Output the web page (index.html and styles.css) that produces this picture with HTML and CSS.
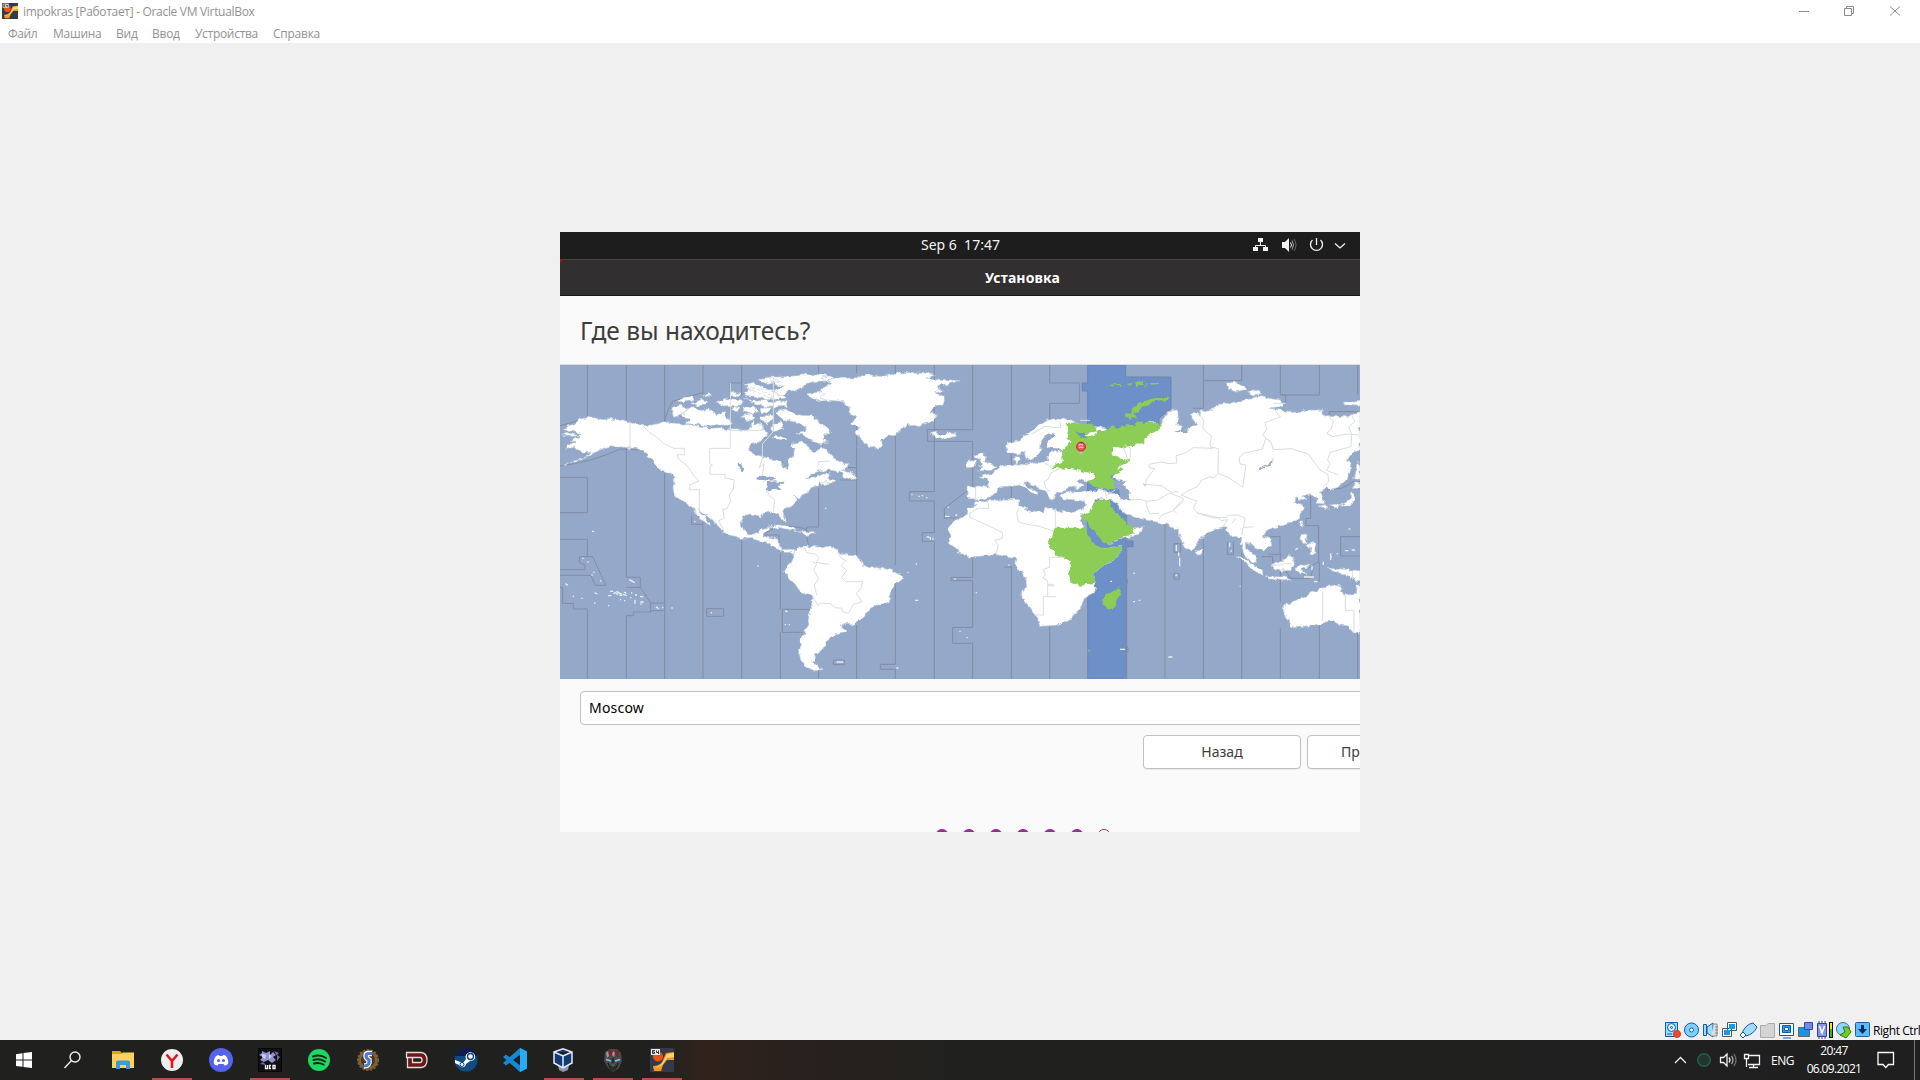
FILE: index.html
```html
<!DOCTYPE html>
<html lang="ru">
<head>
<meta charset="utf-8">
<title>impokras [Работает] - Oracle VM VirtualBox</title>
<link rel="stylesheet" href="styles.css">
</head>
<body>
<header class="titlebar">
  <svg class="app-icon" viewBox="0 0 24 24"><use href="#vm64"/></svg>
  <span class="window-title">impokras [Работает] - Oracle VM VirtualBox</span>
  <svg class="window-controls" width="110" height="20" viewBox="0 0 110 20" fill="none" stroke="#8c8c8c"><path d="M3 10.500H13M48.500 7.500H55.500V14.500H48.500ZM50.500 7V5.500H57.500V12.500H56M94 5.500L104 14.500M94 14.500L104 5.500"/></svg>
</header>
<nav class="menubar"><span class="m1">Файл</span><span class="m2">Машина</span><span class="m3">Вид</span><span class="m4">Ввод</span><span class="m5">Устройства</span><span class="m6">Справка</span></nav>

<main class="desktop">
<section class="guest">
  <div class="gnome-bar">
    <span class="clock">Sep 6&nbsp; 17:47</span>
    <svg class="gnome-icons" width="100" height="27" viewBox="0 0 100 27" fill="none" stroke="#f2f2f2">
      <path d="M8.500 10V13M3.500 18V13.500H13.500V18"/><path fill="#f2f2f2" stroke="none" d="M6 6h5v4h-5ZM1 15h5v4h-5ZM11 15h5v4h-5ZM30 10h3l4-4v14l-4-4h-3Z"/>
      <path d="M38.500 10.500Q40.500 13 38.500 15.500"/><path stroke="#aaa" d="M40 8.500Q43 13 40 17.500"/><path stroke="#666" d="M42 7Q46 13 42 19"/>
      <path stroke-width="1.300" d="M60.500 8A6 6 0 1 0 68.500 8M64.500 6V13M83 11.500L88 16L93 11.500"/>
    </svg>
  </div>
  <div class="installer-title"><i class="corner"></i><b>Установка</b></div>
  <h1>Где вы находитесь?</h1>
  <svg class="map" viewBox="0 0 2400 942" preserveAspectRatio="none">
    <defs><filter id="coast" filterUnits="userSpaceOnUse" x="0" y="0" width="2400" height="942" color-interpolation-filters="sRGB"><feTurbulence type="fractalNoise" baseFrequency=".06" numOctaves="2" seed="4"/><feDisplacementMap in="SourceGraphic" scale="16" xChannelSelector="R" yChannelSelector="G"/></filter></defs>
    <rect width="2400" height="942" fill="#94a8ca"/>
    <path fill="#6d90c8" stroke="#6b84b1" stroke-width="3" d="M1583 0H1697V36H1833V130L1797 160V185L1755 180L1700 190V942H1583V78H1567V54H1583ZM1697 528h22v17h-22z"/>
    <g class="zone-lines">
      <path d="M82 0V160M82 337V443M82 523V575M82 732V942M199 0V168M199 250V637M199 752V942M314 0V170M314 315V714M314 737V942M429 0V90M429 472V942M545 0V90M545 520V942M661 565V733M661 802V942M776 0V50M776 370V486H740V510M776 915V942M890 0V25M890 180V308M890 345V570M890 780V942M1006 0V35M1006 210V600M1006 650V898M1006 913V942M1123 0V380M1123 408V503M1123 529V942M1238 0V194M1238 229V370M1238 580V637M1238 647V787M1238 835V942M1354 0V300M1354 365V400M1354 606V942M1469 0V54H1558V115H1469V180M1469 785V942M1583 730V942M1699 200V640M1699 656V847M1699 860V942M1815 36V150M1815 470V942M1930 0V130M1930 500V942M2045 0V47H1930M2045 560V942M2161 0V90H2278V0M2161 565V710M2161 790V942M2278 590V650M2278 770V942M2393 0V90M2393 800V942"/>
      <path d="M0 337H82M0 443H82M0 523H82M0 614H75V600L58 593V575H98L138 661H106L93 631H0M0 668H8V715H40V732H82M199 637H241V667H199M241 667L272 714H314V737H272V741H220V752H199M272 714V740M440 731H491V754H440ZM395 452V478H429M314 168Q330 105 350 105L429 83M509 54H545M509 54V140M667 733H750M667 733V802H728M605 510H657V560M605 510L660 480L735 490L745 540M0 182L80 160M0 303Q100 290 180 252L260 255L340 330"/>
      <path d="M1238 194H1102V229H1238M1123 380H1048V408H1123M1225 375L1153 430V459H1190M1123 503H1087V529H1123M1238 637H1173V647H1238M1238 787H1178V835H1238M1006 898H961V913H1006M820 885H853V899H820ZM1358 606H1333M782 308H890V345H840M1643 643H1702V656H1643ZM1842 536H1862V562H1842ZM1842 626H1858V642H1842ZM1680 847H1704V860H1680M2165 90H2177V115M2308 155V140H2400M2252 390V460H2238V482H2276V590L2245 610M2400 515H2342V573H2400M2130 515H2160V568H2125M2105 575H2138V595M2002 530V568H2020V530M2300 375L2345 370L2380 350H2400M1900 130H1930M2175 610L2190 640H2250L2260 610"/>
    </g>
    <g filter="url(#coast)">
    <g class="land">
      <path d="M5 207L30 205 55 212 60 205 35 199 13 192 27 182 48 173 58 163 90 157 128 164 158 163 198 168 245 177 268 182 310 171 345 175 376 178 420 184 450 190 480 188 504 194 555 196 570 188 579 164 586 180 601 178 609 195 624 204 611 222 598 232 574 237 566 252 581 268 610 275 638 285 662 290 667 304 683 314 690 300 684 284 701 270 705 251 694 243 697 234 727 232 746 242 750 257 766 263 783 246 799 252 807 264 824 282 849 296 865 296 861 310 844 316 868 319 882 328 887 340 870 345 850 338 845 325 827 318 808 315 775 318 757 328 735 342 765 337 790 327 811 326 806 340 828 347 792 362 776 353 771 362 753 368 747 382 727 389 718 403 704 393 710 407 696 424 672 432 668 440 678 463 673 470 661 457 657 445 628 440 610 445 600 454 571 447 549 453 543 474 549 494 565 506 591 507 600 491 628 486 632 492 616 503 609 514 636 519 654 523 655 543 670 554 690 553 704 558 702 569 690 562 671 562 652 552 637 546 620 531 590 526 570 518 544 520 520 513 490 503 482 491 463 471 450 461 434 447 414 433 425 446 439 462 452 481 443 477 425 463 411 451 401 430 385 420 375 411 356 401 341 383 339 365 345 337 330 326 303 318 292 306 283 291 265 276 252 257 227 250 194 247 151 242 126 252 102 264 74 281 45 291 12 300 43 287 75 279 96 261 68 263 51 256 44 247 18 250 22 236 40 237 50 229 31 229 42 220 60 220 59 213 18 214Z"/>
      <path d="M340 152L333 135 344 124 366 121 383 131 373 142 355 157ZM369 140L396 125 425 140 443 129 470 150 490 143 501 158 520 172 508 181 469 179 437 183 410 177 379 176 392 160 363 153ZM350 109L376 97 397 94 402 103 376 111ZM395 115L424 103 449 109 439 119 414 122ZM425 96L446 83 455 93ZM470 115L500 101 525 105 550 109 543 120 492 123ZM515 80L545 88 535 95 509 88ZM550 78L573 68 599 72 617 83 640 97 620 104 584 94 557 91ZM553 61L584 54 611 69 650 83 678 98 650 104 620 94 583 80ZM593 44L632 39 663 48 624 55ZM626 37L679 35 738 29 780 28 810 31 806 40 774 51 737 58 714 75 681 80 665 92 641 83 652 71 674 66 650 60 635 50ZM550 100L580 108 617 107 650 111 680 107 680 124 642 126 615 125 581 115ZM525 122L540 127 532 140 514 137ZM550 130L580 123 598 139 570 146 550 140ZM600 130L633 128 620 143 605 143ZM546 152L574 146 584 158 562 170ZM600 158L632 147 638 162 620 175 602 167ZM648 141L672 132 700 142 720 151 755 152 783 177 805 190 815 204 795 207 786 220 800 231 780 237 752 226 731 209 708 206 735 201 739 188 716 174 698 169 665 162ZM640 178L665 170 669 190 650 198 630 194ZM635 222L650 211 681 221 675 227ZM738 86L765 83 802 78 825 104 784 108 754 98Z"/>
      <path d="M780 36L810 34 824 43 790 48 845 40 889 38 920 28 966 35 1018 24 1080 21 1123 31 1100 39 1144 43 1200 47 1153 60 1131 66 1153 77 1127 83 1154 99 1150 119 1123 126 1109 144 1132 149 1120 170 1080 181 1038 182 1006 208 983 211 966 228 962 247 946 250 920 240 902 219 888 201 898 184 872 174 891 156 864 143 873 132 846 109 805 106 780 101 796 89 781 74 813 55Z"/>
      <path d="M1110 205L1130 202 1128 209 1151 209 1170 202 1190 205 1188 214 1153 223 1131 220 1119 214ZM625 487L650 480 681 482 709 495 717 499 690 494 660 488ZM716 504L735 498 768 505 743 511ZM780 355L803 350 796 362Z"/>
      <path d="M704 558L719 545 740 540 747 547 764 541 788 548 807 544 830 553 840 564 863 571 888 573 904 588 908 601 952 608 984 613 1008 622 1025 632 1024 645 1006 659 995 675 993 692 983 712 956 720 928 730 919 746 897 766 882 779 855 778 843 783 858 794 849 805 817 811 812 824 796 829 801 843 787 852 776 864 763 865 766 880 758 890 775 905 790 913 765 917 740 908 723 888 715 862 724 842 720 823 733 802 743 780 748 746 755 719 757 695 738 687 719 678 707 659 692 645 683 631 670 623 680 603 695 592 701 573Z"/>
      <path d="M1224 366L1257 363 1284 368 1289 351 1278 339 1260 334 1284 328 1301 320 1327 303 1354 302 1370 298 1361 278 1373 270 1380 284 1373 297 1400 299 1423 291 1450 295 1468 287 1460 271 1483 260 1510 255 1495 250 1464 252 1458 238 1466 221 1484 207 1464 204 1450 220 1436 240 1446 253 1430 275 1412 285 1396 279 1390 262 1375 267 1345 262 1336 250 1340 235 1378 227 1405 205 1440 176 1465 165 1505 159 1537 166 1570 181 1640 188 1700 220 1770 170 1800 180 1825 137 1852 135 1856 160 1850 180 1870 184 1880 197 1895 184 1910 180 1890 150 1902 142 1920 150 1922 139 1960 132 1980 118 2030 110 2072 101 2094 94 2122 99 2160 105 2170 116 2164 125 2125 129 2175 139 2227 139 2240 135 2286 136 2286 148 2304 155 2367 154 2389 143 2400 140V254L2380 263 2355 287 2370 292 2374 310 2365 330 2351 352 2338 366 2316 371 2298 365 2280 382 2289 398 2290 416 2271 415 2271 399 2257 388 2240 385 2232 394 2238 403 2216 403 2208 396 2205 408 2230 424 2228 440 2214 462 2190 475 2152 486 2133 489 2120 497 2110 514 2133 524 2135 540 2113 556 2087 550 2069 535 2056 530 2057 552 2090 576 2092 592 2074 590 2053 569 2043 537 2045 516 2020 518 2001 498 1997 485 1986 486 1970 490 1950 500 1932 515 1913 522 1912 542 1894 559 1872 545 1859 514 1858 489 1840 491 1823 478 1780 469 1745 462 1725 456 1702 450 1684 436 1663 408 1630 402 1606 400 1596 428 1615 450 1650 485 1719 490 1750 485 1744 499 1719 514 1690 520 1650 535 1625 538 1610 510 1582 470 1563 450 1560 465 1580 500 1598 530 1618 543 1635 551 1685 541 1689 552 1660 585 1625 605 1602 625 1602 655 1608 670 1602 685 1568 700 1567 725 1548 745 1530 766 1498 780 1440 784 1430 755 1412 729 1386 698 1385 681 1400 665 1399 646 1388 623 1366 605 1371 577 1335 574 1305 568 1269 576 1233 578 1198 564 1184 546 1165 534 1171 518 1164 490 1180 470 1208 454 1222 448 1225 430 1245 422 1250 410 1297 409 1331 402 1377 404 1376 421 1408 438 1450 440 1455 427 1489 436 1530 443 1564 436 1580 416 1575 405 1545 408 1513 405 1497 392 1505 385 1535 381 1567 379 1597 377 1618 371 1630 375 1673 392 1695 405 1705 387 1684 365 1660 335 1670 320 1612 342 1575 350 1560 343 1550 350 1570 360 1554 372 1539 360 1516 372 1505 383 1490 381 1482 405 1470 402 1458 382 1445 372 1419 362 1402 349 1391 358 1404 367 1432 377 1434 391 1412 382 1395 369 1378 357 1345 364 1319 365 1308 382 1290 397 1253 405 1224 399Z"/>
      <path d="M1219 305L1221 289 1250 286 1245 303ZM1252 318L1270 309 1254 304 1270 296 1257 280 1246 275 1256 263 1273 264 1267 272 1280 276 1277 287 1294 300 1308 305 1296 316ZM1909 558L1926 555 1925 569 1912 570ZM1999 54L2030 51 2050 60 2061 75 2036 81 2006 69ZM2063 80L2093 76 2108 86 2077 89ZM2350 112L2400 106V124L2354 120ZM2222 470L2232 473 2227 486 2220 480ZM2275 424L2297 419 2305 433 2295 428ZM2304 421L2325 418 2345 419 2361 410 2371 403 2372 382 2382 387 2386 404 2366 423 2341 421 2325 434 2317 425ZM2378 370L2385 350 2400 355V370ZM2384 340L2392 290 2400 310V345ZM2220 509L2238 507 2235 526 2244 532 2228 536ZM2235 540L2264 532 2265 568 2250 567 2253 550ZM2028 572L2053 580 2082 601 2107 615 2109 628 2088 623 2060 595ZM2115 635L2175 636 2193 644 2175 647 2125 641ZM2133 602L2150 594 2177 580 2190 568 2198 577 2204 600 2190 616 2162 618 2140 610ZM2215 605L2250 597 2240 606 2225 615 2240 629 2223 621 2220 629 2208 614ZM2305 607L2328 609 2350 613 2400 617V647L2383 645 2370 634 2339 626 2310 614ZM2171 719L2206 710 2235 696 2250 682 2275 674 2293 665 2325 661 2347 667 2341 680 2365 690 2390 684 2392 657 2400 657V806L2380 803 2362 782 2340 780 2313 768 2284 774 2253 783 2215 784 2190 786 2183 760 2170 739Z"/>
    </g>
    <g fill="#94a8ca">
      <path d="M610 222L632 204 645 208 640 222 681 226 690 206 680 188 700 202 697 240 640 235ZM532 296L544 298 552 318 543 317ZM587 343L602 332 628 334 649 344 630 347ZM621 376L624 351 644 349 658 351 675 350 675 359 654 359 661 374 638 375ZM1660 348L1698 346 1690 360 1708 378 1711 403 1682 403 1674 378 1657 365ZM1475 208L1487 206 1476 222 1460 231 1455 245 1510 255 1465 257 1444 250 1440 238 1460 222ZM2096 310L2118 302 2140 282 2140 294 2121 306 2101 315ZM1837 202L1862 195 1867 182 1890 188 1876 193 1884 201ZM1746 355L1760 361 1750 362Z"/>
    </g>
    <g fill="#8bcd55">
      <path d="M1517 174L1560 172 1610 185 1613 199 1580 205 1569 215 1590 213 1610 207 1611 195 1635 195 1657 184 1672 191 1700 181 1728 180 1732 170 1759 178 1767 172 1802 179 1803 190 1773 207 1753 220V238L1717 240 1692 250 1660 245 1658 268 1680 281 1710 285 1709 292 1670 306 1688 315 1670 325 1654 330 1661 348 1665 366 1655 376 1620 370 1580 354 1609 337 1602 325 1560 318 1535 313 1500 310 1475 309 1488 297 1508 288 1506 256 1535 230 1520 221 1524 193ZM1705 160L1693 147 1713 144 1718 127 1742 112 1777 101 1825 98 1827 104 1785 112 1750 124 1736 142 1719 147 1733 160ZM1645 57L1658 60 1672 57 1690 61 1684 65 1665 61 1656 65ZM1700 58L1718 54 1714 60ZM1722 54L1742 47 1738 54 1750 46 1746 59 1725 67 1732 58ZM1752 62L1766 54 1762 62ZM1770 54L1800 54 1797 58 1773 59ZM1563 450L1588 440 1606 409 1629 401 1650 409 1662 437 1684 451 1699 479 1723 487 1720 505 1688 518 1650 535 1628 536 1613 510 1582 476ZM1483 488H1576L1602 530 1618 543 1635 551 1685 541 1689 552 1660 585 1625 605 1602 625 1605 657 1560 662 1528 648 1523 621 1534 592 1510 578 1484 566 1463 536 1477 513ZM1633 688L1660 682 1672 668 1682 668 1682 682 1665 725 1643 735 1628 718ZM1583 857h8v5h-8z"/>
    </g>
    <path fill="#6d90c8" d="M1540 197L1570 207 1584 220 1560 216ZM1580 466L1595 489 1610 505 1630 534 1663 541 1641 550 1616 544 1594 529 1581 506ZM1670 440L1700 452V465L1684 461ZM1583 372L1596 366 1618 373 1612 381Z"/>
    </g>
    <g class="borders">
      <path d="M210 170V250M245 178L267 202 285 212 310 235 341 250H373V269H352L355 282 382 303 401 331 417 348 390 359 388 374H418V435M511 54V250H449V295L457 300 450 306V328H495V338L523 345 519 375 508 390 512 410 500 432H488L493 460 475 467 490 493M509 196H609V180M640 40V200L607 237V282L598 308 612 297 607 332M622 375L628 392 644 405 640 440M776 300V290L808 288M732 545L740 563 767 567 778 580 768 592 807 598M832 560L844 580 858 587 843 602 860 616 845 637 856 650H908L902 672 888 685 906 710 880 718 866 745 847 740 846 730 827 728 810 716 781 714 775 722 758 696M758 590L770 597 761 614 776 641 763 660 770 690"/>
      <path d="M1247 365V400H1224M1284 410L1286 430 1255 430 1229 445V456L1327 502V520L1303 526 1315 540 1308 567M1376 430L1370 444 1375 470 1400 478 1434 483 1480 498M1486 430V486M1515 577L1469 577V607L1450 613 1456 630 1448 638 1463 648V658H1480V664L1463 660V695H1488M1463 694H1450V750H1424M1500 170L1502 189 1455 184 1415 207M1455 295L1476 309M1500 310L1473 324 1465 342 1452 350 1459 372 1471 380M1560 166L1590 166M1693 240L1712 250 1710 278M1690 245L1705 290M1635 375L1640 400M1642 390L1665 375"/>
      <path d="M1920 150L1932 167 1928 190 1955 215 1949 240 1959 250 1900 248 1880 262 1848 273 1851 294 1827 296 1804 291 1767 298V308L1784 311 1762 340 1755 358 1804 362 1835 382 1854 380M1950 245L1975 251 1974 326 1961 339 1950 335 1925 345 1912 365 1882 378 1864 390 1897 404 1911 408 1900 430 1913 444 1960 459 1998 457 2005 451 2035 450 2055 460 2050 488 2080 485M1975 326L2004 337 2032 355 2048 367 2058 300 2040 297 2037 278 2052 264 2107 253 2117 220 2133 231 2140 254 2195 251 2245 267 2280 315 2304 329 2306 350 2289 365M2142 131L2161 156 2145 162 2115 173 2120 192 2108 210 2119 220 2133 231M2307 155L2320 170 2314 190 2300 205 2318 215 2363 207 2400 210M2375 150L2385 170 2366 185 2375 208 2373 245 2310 262 2303 285 2310 298 2300 316 2335 330M1709 405L1740 403 1760 409 1793 405 1829 384 1870 400 1867 412 1840 437 1805 450 1797 462M1760 409V425L1770 446 1797 445M1864 408L1840 435 1850 445M1913 444L1975 458 1983 467 2002 464 1990 484M2015 475L2028 460M2049 488L2045 510M2177 115H2140M2288 680V767M2356 690V736H2382V803M2378 617V643M2134 600H2167L2170 596H2195"/>
    </g>
    <path class="islands" d="M67 580h4M82 591h4M100 622h4M94 630h4M120 648h4M96 499h6M16 656l8 5M104 683l8 4M38 694h4M64 700h4M102 714h4M144 722h4M144 692h10M150 679h10M164 681l10 8M175 682l10 6M178 691h9M188 687l12 5M170 678l5 5M160 685h5M192 681l7 4M180 704h4M192 707h4M213 684h4M210 698h4M225 690h6M240 695h10M225 704v12M241 711h10M241 717h4M208 644l16 9M288 725l8 6M306 728h4M334 729h4M452 743h4M403 470h4M592 603h4M675 738l8 2M674 779h4M686 779h4M795 430h4M1054 389h4M1075 394h4M1085 392h4M1098 398h4M1163 427h4M1155 454h14M1186 452l6-3M1100 516h8M1111 516v8M1119 518v6M1067 597h4M1042 622h4M1065 706h10M1183 642h4M1247 683h4M1345 600h4M1198 799h4M1219 818h4M830 891h20M1009 909h6M1651 649h5M1680 853h15M1720 625h5M1720 710h5M1736 706h5M1825 876h12M1849 540v18M1856 562v12M1859 578v26M1846 630h6M2009 533v12M2012 558h4M2039 664h3M2206 555l8-6M2232 636h30M2262 650h10M2290 590v10M2312 565v20M2355 557h10M2375 555h10M2366 492h5M2330 566h4M2310 575h6M2245 538l8 9M2256 602v14"/>
    <path d="M1563 255V268" stroke="#d7b5b5" stroke-width="8"/><circle cx="1563" cy="245" r="13" fill="#ed5960" stroke="#bd171e" stroke-width="3"/><path d="M1555 241Q1562 235 1570 241M1556 247h14" stroke="#ffbabd" stroke-width="4" fill="none"/>
  </svg>
  <div class="city">Moscow</div>
  <div class="actions"><div class="button">Назад</div><div class="button next">Продолжить</div></div>
  <div class="dots"><i></i><i></i><i></i><i></i><i></i><i></i><i class="empty"></i></div>
</section>
</main>

<footer class="vm-status">
<svg width="212" height="20" viewBox="0 0 212 20" fill="none">
  <g stroke="#145bab" fill="#9fdcff">
  <path d="M2.500 2.500h12v14h-12z"/><circle cx="8.500" cy="7.500" r="4" fill="#d9f4ff"/><circle cx="8.500" cy="7.500" r="1" /><path d="M4 14h5" /><circle cx="14" cy="14" r="3.500" fill="#ee4c25" stroke="#c43c1d"/>
  <circle cx="28.500" cy="10" r="7" fill="#7fd0ff"/><circle cx="28.500" cy="10" r="2" fill="#fff"/>
  <path d="M40.500 4.500h3v11h-3zM44 7l6-4v14l-6-4z"/><path stroke="#888" fill="#ddd" d="M51 4h3v12h-6M52 7h3M52 10h3M52 13h3"/>
  <path stroke="#555" fill="#fff" d="M64.500 2.500h9v8h-9zM59.500 8.500h9v8h-9z"/><path stroke="none" fill="#1599ef" d="M66 4h6v5h-6zM61 10h6v5h-6z"/>
  <path d="M79 13Q83 4 90 3L94 7Q91 14 83 16Z"/><path fill="#fff" d="M77 15L80 12L83 15L80 18Z"/>
  <path stroke="#aaa" fill="#d4d4d4" d="M97.500 5.500H103L105 3.500H111.500V17.500H97.500Z"/>
  <path fill="#fff" d="M116.500 3.500h14v12h-14zM120 18h8"/><path fill="#23a4f1" d="M119.500 5.500h8v7h-8z"/><path fill="#fff" d="M121.500 7.500h4v3h-4z"/>
  <path fill="#1694e6" stroke="#666" d="M135.500 7.500h11v9h-11z"/><path fill="#7189e7" stroke="#3446a5" d="M141.500 2.500h8v7h-8z"/>
  <path fill="#8695e9" stroke="#35449b" d="M154.500 3.500h9v13h-9zM156 1v2M159 1v2M162 1v2M156 17v2M159 17v2M162 17v2"/><path stroke="#fff" stroke-width="1.500" d="M156.500 6L159 13L161.500 6" fill="none"/>
  </g>
  <path fill="#000" d="M166 2h4v16h-4z"/><path fill="#ffe600" d="M167 3h2v6h-2z"/><path fill="#20c51c" d="M167 9h2v8h-2z"/>
  <circle cx="180" cy="9" r="6.500" fill="#91d6ff" stroke="#3b6fa1"/><path fill="#72cc28" stroke="#35780f" d="M180 7L185 7L188 12L183 18L177 15L182 12Z"/>
  <rect x="192.500" y="2.500" width="14" height="14" rx="1" fill="#59bcfa" stroke="#1e5d9e"/><path fill="#072c58" d="M198 5h3v4h3l-4.500 5L195 9h3z"/>
</svg><span>Right Ctrl</span>
</footer>

<footer class="taskbar">
  <div class="apps">
    <div class="task shift"><svg viewBox="0 0 24 24"><path fill="#fff" d="M4 6.200L10.500 5.300V11.500H4ZM11.500 5.100L20 4V11.500H11.500ZM4 12.500H10.500V18.800L4 17.900ZM11.500 12.500H20V20L11.500 18.900Z"/></svg></div>
    <div class="task shift"><svg viewBox="0 0 24 24" fill="none" stroke="#eee" stroke-width="1.400"><circle cx="14" cy="9" r="5"/><path d="M10.500 12.500L3.500 20"/></svg></div>
    <div class="task"><svg viewBox="0 0 24 24"><path fill="#e9a300" d="M1 3H9L11 5V8H1Z"/><path fill="#ffd35b" d="M1 6H10L12 4.500H23V20H1Z"/><path fill="#3b98d9" d="M5 21V14Q5 12.500 7 12.500H17Q19 12.500 19 14V21H15V17H9V21Z"/></svg></div>
    <div class="task active"><svg viewBox="0 0 24 24"><circle cx="12" cy="12" r="11" fill="#eee"/><path d="M6.500 6.500L12 13L17.500 6.500M12 12V20" stroke="#df1820" stroke-width="2.600" fill="none"/></svg></div>
    <div class="task"><svg viewBox="0 0 24 24"><circle cx="12" cy="12" r="12" fill="#5562ee"/><path fill="#fff" d="M7 8Q9 7 10 7L10.500 8H13.500L14 7Q16 7 17 8Q20 12 19 16Q17 17.500 15.500 17.500L14.500 16H9.500L8.500 17.500Q7 17.500 5 16Q4 12 7 8Z"/><circle cx="9.500" cy="12.500" r="1.500" fill="#5562ee"/><circle cx="14.500" cy="12.500" r="1.500" fill="#5562ee"/></svg></div>
    <div class="task active"><svg viewBox="0 0 24 24"><path fill="#101015" stroke="#050505" d="M.5.500h23v23H.5z"/><path fill="#9292cf" d="M1 7L4 5V3L8 5L12 3V7L15 4L18 7L15 9L18 12L14 15L10 12L6 14L2 12L5 9Z"/><path fill="#d0cbf4" d="M4 6L8 7L7 11L4 9ZM11 6L14 8L11 11Z"/><path fill="#66709e" d="M16 3L21 5L19 7L22 9L19 13L19 8ZM2 16L5 14L8 17Z"/><path d="M7.500 17V20.500H9.500V17M13 17.500H11.500V20.500H13M15 17.500H17V20.500H15Z" stroke="#fff" stroke-width="1.300" fill="none"/></svg></div>
    <div class="task"><svg viewBox="0 0 24 24"><circle cx="12" cy="12" r="11" fill="#1ed760"/><path d="M6 8.500Q13 6 19 10M6.500 12Q12 10 18 13.500M7 15.500Q12 14 16.500 16.500" stroke="#17231b" stroke-width="2" fill="none" stroke-linecap="round"/></svg></div>
    <div class="task"><svg viewBox="0 0 24 24"><circle cx="12" cy="12" r="8.500" fill="#4d3a1c" stroke="#7c6138" stroke-width="3"/><circle cx="12" cy="12" r="10.300" fill="none" stroke="#7c6138" stroke-width="1.500" stroke-dasharray="2.400 1.500"/><path d="M16 5.500H13Q10 5.500 10 8Q10 10 13 12Q14 18 8 18" stroke="#fff" stroke-width="5.500" fill="none"/><path d="M16 5.500H13Q10 5.500 10 8Q10 10 13 12Q14 18 8 18" stroke="#4d79d5" stroke-width="3.200" fill="none"/></svg></div>
    <div class="task"><svg viewBox="0 0 24 24"><path d="M1.500 4.500H16Q22 5 22 12Q22 19 16 19.500H2.500V9.500H7.500V14.500H15Q17 14.500 17 12Q17 9.500 15 9.500H1.500Z" fill="#741419" stroke="#ddd" stroke-width="1.300"/></svg></div>
    <div class="task"><svg viewBox="0 0 24 24"><circle cx="12" cy="12" r="11.500" fill="#124a84"/><path d="M1 8A11.500 11.500 0 0 1 23 8Z" fill="#101d4c"/><path fill="#fff" d="M1 12L9 15L12 11Q10 6 16 4Q22 5 21 10Q20 13 16 13L12 16Q11 20 7 19L5 17L1 15Z"/><circle cx="16.500" cy="8.500" r="3" fill="#fff" stroke="#124078" stroke-width="1.400"/><circle cx="8" cy="16.500" r="2" fill="none" stroke="#124078"/></svg></div>
    <div class="task"><svg viewBox="0 0 24 24"><path fill="#1688d2" d="M17 0L24 3.500V20.500L17 24L0 9L3 6.500L18 18V6L3 17.500L0 15Z"/><path fill="#2aacf5" d="M17 0L24 3.500V20.500L17 24Z"/><path fill="#1f2020" d="M17 7.500V16.500L11 12Z"/></svg></div>
    <div class="task active shift"><svg viewBox="0 0 24 24"><path fill="#8c96a8" d="M7 17L12 15L18 17L17 22L12 24L8 22Z"/><path fill="#143b70" stroke="#e3edff" stroke-width="1.500" d="M3 4L12 .8L21 4V15L12 20L3 15ZM3 4L12 8L21 4M12 8V20"/></svg></div>
    <div class="task active"><svg viewBox="0 0 24 24"><path fill="#4b484a" d="M4 4L9 1L16 1L20 5L21 13L18 20L12 24L7 20L3 13Z"/><path fill="#812328" d="M8 2L12 3L11 8L8 7ZM14 1L18 4L17 10L14 6Z"/><path fill="#9b9798" d="M5 5L7 3L8 8L6 10ZM12 3L14 5L13 9L11 7ZM9 17L12 15L15 17L12 19Z"/><path stroke="#6fcaf1" stroke-width="1.500" d="M5 11.500L10 13M14 13L19 11.500"/><path stroke="#111" stroke-width="1" d="M12 10V23M7 15L9 20M17 15L15 20M10 16V22M14 16V22"/></svg></div>
    <div class="task active"><svg viewBox="0 0 24 24"><g id="vm64"><path fill="#343a49" d="M0 0h24v24H0z"/><circle cx="8" cy="8.500" r="5" fill="#e75417"/><path fill="#f49525" d="M24 4V12L17 12L13 17L11 23H4L3 18Q9 18 12 14L16 5Z"/><path fill="#ffd36b" d="M24 5L17 6L13 14Q10 19 4 19Q10 20 13 16L17 10L24 9Z"/><path fill="#eee" d="M1 1h9v6H1z"/><path stroke="#222" fill="none" stroke-width=".9" d="M5 2.500H2.500V5.500H4.500V4H3M6.500 2.500V4.500H9M8.500 2.500V6"/></g></svg></div>
  </div>
  <svg class="tray" width="90" height="40" viewBox="0 0 90 40" fill="none" stroke="#f2f2f2" stroke-width="1.300"><path d="M1 23L6.500 17.500L12 23"/><circle cx="30" cy="20" r="6.300" fill="#24352d" stroke="#20644b"/><path d="M46.500 17.500H49.500L53 14V26L49.500 22.500H46.500ZM55 17.500Q57 20 55 22.500"/><path stroke="#aaa" d="M57.500 16Q60.500 20 57.500 24"/><path stroke="#707070" d="M60 14Q64 20 60 26"/><path d="M75 15.500H85.500V24.500H74M79.500 25V28M75 27.500H84M70.500 14.500H74.500V18.500H70.500ZM72.500 19V27"/></svg>
  <span class="lang">ENG</span>
  <div class="time"><span>20:47</span><span>06.09.2021</span></div>
  <svg class="notify" width="18" height="18" viewBox="0 0 18 18" fill="none" stroke="#fff" stroke-width="1.300"><path d="M1 1.500H16.500V13.500H11.500L8.800 16.500L6 13.500H1Z"/></svg>
  <i class="show-desktop"></i>
</footer>
</body>
</html>
```
FILE: styles.css
```css
* { box-sizing: border-box; }
body { margin: 0; width: 1920px; height: 1080px; overflow: hidden; display: flex; flex-direction: column; background: #f0f0f0; font-family: "Open Sans", "Noto Sans", sans-serif; }
svg { display: block; flex: none; }
.titlebar { height: 22px; background: #fff; display: flex; align-items: center; color: #929292; font-size: 12px; padding-left: 2px; }
.app-icon { width: 16px; height: 16px; margin-right: 5px; }
.window-title { white-space: nowrap; letter-spacing: -.31px; padding-top: 1px; }
.window-controls { margin-left: auto; margin-right: 14px; }
.menubar { height: 21px; background: #fff; display: flex; align-items: center; padding: 1px 0 0 8px; color: #929292; font-size: 12px; white-space: nowrap; }
.m1 { width: 45px; } .m2 { width: 63px; } .m3 { width: 36px; } .m4 { width: 43px; } .m5 { width: 78px; }
.menubar span { letter-spacing: -.25px; }
.menubar .m1 { letter-spacing: -.4px; }
.menubar .m5, .menubar .m6 { letter-spacing: -.35px; }
.menubar .m5 { letter-spacing: -.3px; }
.menubar .m6 { letter-spacing: -.25px; }
.desktop { height: 977px; padding-top: 189px; display: flex; justify-content: center; align-items: flex-start; }
.guest { width: 800px; height: 600px; overflow: hidden; background: #fafafa; font-family: "Noto Sans", sans-serif; color: #3d3d3d; }
.gnome-bar { height: 27px; background: #1d1d1d; display: flex; align-items: center; color: #f2f2f2; font-size: 14px; }
.clock { width: 80px; margin-left: 361px; padding-bottom: 2px; white-space: nowrap; }
.gnome-icons { margin-left: 251px; }
.installer-title { height: 37px; background: #322f30; border-top: 1px solid #474546; border-bottom: 1px solid #191818; padding-left: 425px; color: #fff; font-size: 14px; line-height: 36px; letter-spacing: .15px; position: relative; }
.corner { position: absolute; left: 0; top: -1px; border-top: 4px solid #a41616; border-right: 4px solid transparent; }
h1 { height: 69px; border-bottom: 1px solid #dedede; margin: 0; padding-left: 20px; line-height: 69px; font-size: 24.500px; font-weight: 400; letter-spacing: 0; }
.map { width: 800px; height: 314px; }
.zone-lines { fill: none; stroke: #838da2; stroke-width: 3; }
.land { fill: #fff; stroke: #c5d0d8; stroke-width: 2; stroke-linejoin: round; }
.borders { fill: none; stroke: #d8dfde; stroke-width: 3; }
.islands { fill: none; stroke: #e8eef0; stroke-width: 4; }
.city { width: 1000px; height: 34px; margin: 12px 0 10px 20px; padding-left: 8px; border: 1px solid #c1c1c1; border-radius: 4px; background: #fff; color: #000; font-size: 14px; line-height: 32px; letter-spacing: .2px; }
.actions { display: flex; gap: 6px; margin-left: 583px; width: 322px; }
.button { width: 158px; height: 34px; flex: none; border: 1px solid #c1c1c1; border-radius: 4px; background: #fff; box-shadow: 0 1px 1px #0001; text-align: center; line-height: 32px; font-size: 14px; }
.next { text-align: left; padding-left: 33px; letter-spacing: .1px; }
.dots { display: flex; gap: 13px; margin: 60px 0 0 375px; }
.dots i { width: 14px; height: 14px; border: 1px solid #992b92; border-radius: 50%; background: #992b92; flex: none; }
.dots .empty { background: #fff; }
.vm-status { height: 20px; display: flex; align-items: center; padding-left: 1663px; font-size: 12px; color: #000; white-space: nowrap; }
.vm-status span { margin-left: -2px; letter-spacing: -.42px; }
.taskbar { height: 40px; display: flex; align-items: center; color: #fff; background: linear-gradient(90deg, #20211f 0, #20211f 650px, #30231c 705px, #2a211d 780px, #20211f 950px, #1f1f1f 100%); font-size: 12px; }
.apps { display: flex; width: 686px; gap: 9px; padding-left: 5px; }
.task { width: 40px; height: 40px; flex: none; display: flex; align-items: center; justify-content: center; border-bottom: 2px solid transparent; padding-top: 2px; }
.task svg { width: 24px; height: 24px; }
.shift { padding-right: 3px; }
.active { border-color: #b44f4e; }
.tray { margin-left: 988px; }
.lang { margin-left: 7px; width: 35px; letter-spacing: -.5px; }
.time { display: flex; flex-direction: column; width: 60px; margin-left: -2px; text-align: center; line-height: 18px; letter-spacing: -.65px; align-items: center; }
.notify { margin-left: 13px; }
.show-desktop { width: 1px; height: 40px; background: #767676; margin-left: 19px; }
```
